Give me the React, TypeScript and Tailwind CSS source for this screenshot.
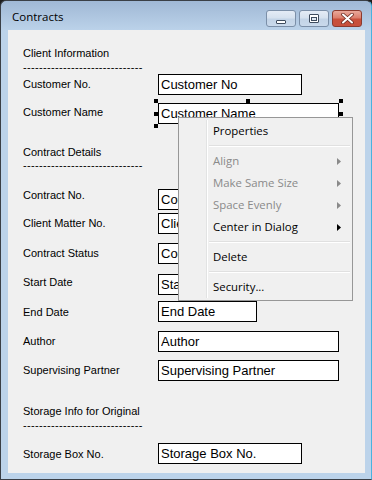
import React from "react";

type Row = {
  label: string;
  value: string;
  width: string;
  mt: string;
  labelMt: string;
  selected?: boolean;
};

const Dashes = ({ mt }: { mt: string }) => (
  <div className={`${mt} h-[13px] leading-[13px] text-[11px] tracking-[0.33px] text-black whitespace-nowrap`}>
    ------------------------------
  </div>
);

const Heading = ({ text, mt }: { text: string; mt: string }) => (
  <div className={`${mt} h-[13px] leading-[13px] text-[11px] text-black whitespace-nowrap`}>{text}</div>
);

const Handle = ({ cls }: { cls: string }) => <div className={`absolute w-[4px] h-[4px] bg-black ${cls}`} />;

const FormRow = ({ row }: { row: Row }) => (
  <div className={`${row.mt} flex items-start h-[21px]`}>
    <div className={`${row.labelMt} w-[135px] h-[13px] leading-[13px] text-[11px] text-black whitespace-nowrap`}>
      {row.label}
    </div>
    <div
      className={`relative ${row.width} h-[21px] border border-black bg-white pl-[2px] text-[13px] leading-[19px] text-black whitespace-nowrap`}
    >
      <span className="block overflow-hidden">{row.value}</span>
      {row.selected && (
        <>
          <Handle cls="left-[-5px] top-[-5px]" />
          <Handle cls="left-[-5px] top-[8px]" />
          <Handle cls="left-[-5px] bottom-[-5px]" />
          <Handle cls="left-[87px] top-[-5px]" />
          <Handle cls="left-[87px] bottom-[-5px]" />
          <Handle cls="right-[-5px] top-[-5px]" />
          <Handle cls="right-[-5px] top-[8px]" />
          <Handle cls="right-[-5px] bottom-[-5px]" />
        </>
      )}
    </div>
  </div>
);

const rowsA: Row[] = [
  { label: "Customer No.", value: "Customer No", width: "w-[144px]", mt: "mt-0", labelMt: "mt-[4px]" },
  { label: "Customer Name", value: "Customer Name", width: "w-[181px]", mt: "mt-[8px]", labelMt: "mt-[3px]", selected: true },
];

const rowsB: Row[] = [
  { label: "Contract No.", value: "Contract No", width: "w-[144px]", mt: "mt-[17px]", labelMt: "mt-0" },
  { label: "Client Matter No.", value: "Client Matter No", width: "w-[144px]", mt: "mt-[3px]", labelMt: "mt-[4px]" },
  { label: "Contract Status", value: "Contract Status", width: "w-[144px]", mt: "mt-[9px]", labelMt: "mt-[4px]" },
  { label: "Start Date", value: "Start Date", width: "w-[99px]", mt: "mt-[10px]", labelMt: "mt-[2px]" },
  { label: "End Date", value: "End Date", width: "w-[99px]", mt: "mt-[6px]", labelMt: "mt-[5px]" },
  { label: "Author", value: "Author", width: "w-[181px]", mt: "mt-[9px]", labelMt: "mt-[4px]" },
  { label: "Supervising Partner", value: "Supervising Partner", width: "w-[181px]", mt: "mt-[8px]", labelMt: "mt-[4px]" },
];

const rowC: Row = { label: "Storage Box No.", value: "Storage Box No.", width: "w-[144px]", mt: "mt-[11px]", labelMt: "mt-[5px]" };

type MenuEntry = { sep: true } | { sep?: false; label: string; disabled?: boolean; arrow?: boolean };

const menu: MenuEntry[] = [
  { label: "Properties" },
  { sep: true },
  { label: "Align", disabled: true, arrow: true },
  { label: "Make Same Size", disabled: true, arrow: true },
  { label: "Space Evenly", disabled: true, arrow: true },
  { label: "Center in Dialog", arrow: true },
  { sep: true },
  { label: "Delete" },
  { sep: true },
  { label: "Security..." },
];

const Arrow = ({ color }: { color: string }) => (
  <svg width="4" height="7" viewBox="0 0 4 7">
    <path d="M0 0 L4 3.5 L0 7 Z" fill={color} />
  </svg>
);

const CaptionButton = ({ kind }: { kind: "min" | "max" | "close" }) => {
  const base =
    kind === "close"
      ? "border-[#8b3a2e] bg-[linear-gradient(to_bottom,#e9a99b_0%,#dc7f6d_45%,#c9503b_55%,#c7503c_100%)]"
      : "border-[#7b8fa8] bg-[linear-gradient(to_bottom,#e4ecf6_0%,#d6e2ef_45%,#c3d4e7_55%,#c9d9eb_100%)]";
  return (
    <div className={`w-[30px] h-[17px] rounded-[3px] border flex items-center justify-center ${base}`}>
      {kind === "min" && (
        <svg width="10" height="4" viewBox="0 0 10 4" className="mt-[6px]">
          <rect x="0.5" y="0.5" width="9" height="3" rx="0.5" fill="#ffffff" stroke="#3e4c5e" />
        </svg>
      )}
      {kind === "max" && (
        <svg width="10" height="9" viewBox="0 0 10 9">
          <rect x="0.5" y="0.5" width="9" height="8" rx="0.5" fill="#ffffff" stroke="#3e4c5e" />
          <rect x="2.5" y="3.5" width="5" height="3" fill="#dfe8f2" stroke="#3e4c5e" />
        </svg>
      )}
      {kind === "close" && (
        <svg width="13" height="11" viewBox="0 0 13 11">
          <path d="M2 1.5 L11 9.5 M11 1.5 L2 9.5" stroke="#6b2a20" strokeWidth="3.6" strokeLinecap="round" />
          <path d="M2 1.5 L11 9.5 M11 1.5 L2 9.5" stroke="#ffffff" strokeWidth="2" strokeLinecap="round" />
        </svg>
      )}
    </div>
  );
};

export default function App() {
  return (
    <div className="relative w-[372px] h-[480px] bg-[#1c1c1c] overflow-hidden font-['Liberation_Sans',Arial,sans-serif]">
      <div className="w-full h-full rounded-t-[6px] border border-[#3a3f46] border-r-[#49b2df] bg-[linear-gradient(to_bottom,#a0b8d5_0px,#bcd3ea_30px,#bcd3ea_100%)] flex flex-col">
        {/* title bar */}
        <div className="h-[29px] shrink-0 flex items-start pl-[11px] pr-[9px]">
          <div className="mt-[8px] text-[11.5px] leading-[16px] text-black font-['Open_Sans',sans-serif]">Contracts</div>
          <div className="ml-auto mt-[9px] flex gap-[3px]">
            <CaptionButton kind="min" />
            <CaptionButton kind="max" />
            <CaptionButton kind="close" />
          </div>
        </div>
        {/* client area */}
        <div className="ml-[7px] mr-[6px] h-[443px] bg-[#f0f0f0] pl-[15px] flex flex-col">
          <Heading text="Client Information" mt="mt-[17px]" />
          <Dashes mt="mt-[1px]" />
          {rowsA.map((r) => (
            <FormRow key={r.label} row={r} />
          ))}
          <Heading text="Contract Details" mt="mt-[22px]" />
          <Dashes mt="mt-0" />
          {rowsB.map((r) => (
            <FormRow key={r.label} row={r} />
          ))}
          <Heading text="Storage Info for Original" mt="mt-[24px]" />
          <Dashes mt="mt-[1px]" />
          <FormRow row={rowC} />
        </div>
      </div>

      {/* context menu */}
      <div className="absolute left-[178px] top-[117px] w-[175px] h-[184px] border border-[#979797] bg-[#f0f0f0] py-[2px] font-['Open_Sans',sans-serif] text-[11.4px]">
        <div className="absolute left-[27px] top-[2px] bottom-[2px] w-px bg-[#e2e3e3]" />
        <div className="absolute left-[28px] top-[2px] bottom-[2px] w-px bg-white" />
        {menu.map((m, i) =>
          m.sep ? (
            <div key={i} className="relative h-[8px] flex flex-col justify-center ml-[30px] mr-[2px]">
              <div className="h-px bg-[#e0e0e0]" />
              <div className="h-px bg-white" />
            </div>
          ) : (
            <div
              key={i}
              className={`relative h-[22px] flex items-center justify-between pl-[34px] pr-[11px] leading-[16px] ${
                m.disabled ? "text-[#8a8a8a]" : "text-black"
              }`}
            >
              <span>{m.label}</span>
              {m.arrow && <Arrow color={m.disabled ? "#8a8a8a" : "#000000"} />}
            </div>
          )
        )}
      </div>
    </div>
  );
}
